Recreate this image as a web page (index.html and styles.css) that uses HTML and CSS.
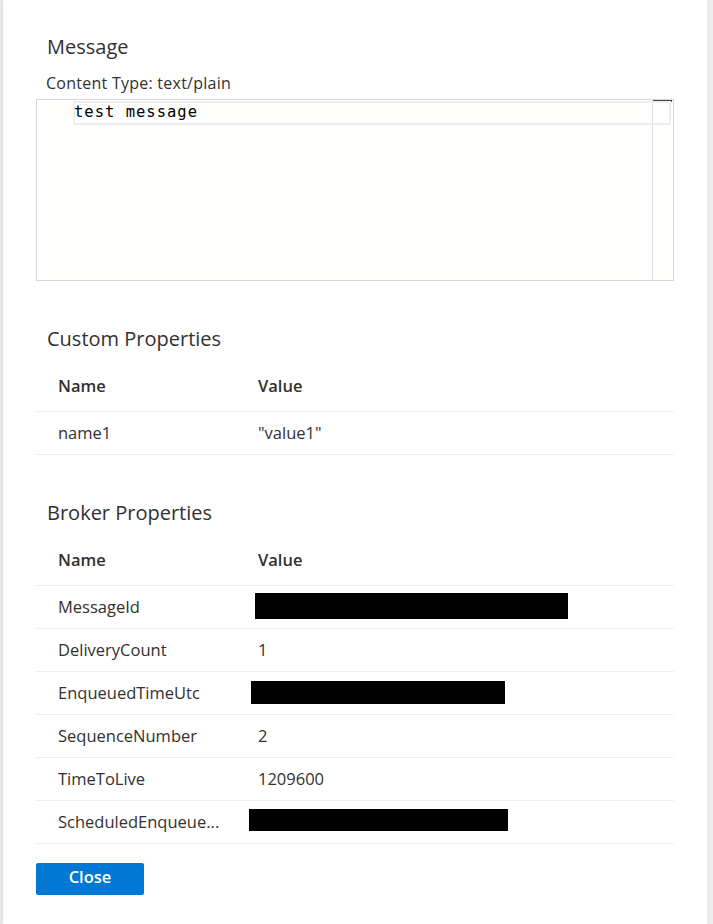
FILE: index.html
```html
<!DOCTYPE html>
<html>
<head>
<meta charset="utf-8">
<link rel="stylesheet" href="styles.css">
</head>
<body>
<div class="panel">
  <h2 class="heading first">Message</h2>
  <div class="ctype">Content Type: text/plain</div>
  <div class="editor">
    <div class="lines">
      <div class="current-line"><span class="code">test message</span></div>
    </div>
    <div class="ruler"><div class="ruler-cursor"></div></div>
  </div>

  <h2 class="heading">Custom Properties</h2>
  <div class="table">
    <div class="row head"><div class="c1">Name</div><div class="c2">Value</div></div>
    <div class="row"><div class="c1">name1</div><div class="c2">"value1"</div></div>
  </div>

  <h2 class="heading">Broker Properties</h2>
  <div class="table">
    <div class="row head"><div class="c1">Name</div><div class="c2">Value</div></div>
    <div class="row"><div class="c1">MessageId</div><div class="c2"><span class="redact r1"></span></div></div>
    <div class="row"><div class="c1">DeliveryCount</div><div class="c2">1</div></div>
    <div class="row"><div class="c1">EnqueuedTimeUtc</div><div class="c2"><span class="redact r2"></span></div></div>
    <div class="row"><div class="c1">SequenceNumber</div><div class="c2">2</div></div>
    <div class="row"><div class="c1">TimeToLive</div><div class="c2">1209600</div></div>
    <div class="row"><div class="c1">ScheduledEnqueue...</div><div class="c2"><span class="redact r3"></span></div></div>
  </div>

  <button class="close">Close</button>
</div>
</body>
</html>
```
FILE: styles.css
```css
html, body {
  margin: 0;
  padding: 0;
  height: 100%;
}
body {
  background: #ececec;
  font-family: "Open Sans", "Noto Sans", sans-serif;
  color: #323130;
}
.panel {
  margin-left: 3px;
  width: 704px;
  min-height: 924px;
  box-sizing: border-box;
  background: #ffffff;
  padding: 33px 33px 0 33px;
  box-shadow: -1px 0 3px rgba(0,0,0,0.08);
}
.heading {
  margin: 0;
  font-size: 20px;
  font-weight: 400;
  line-height: 28px;
  padding-left: 11px;
  margin-top: 44px;
  margin-bottom: 14px;
}
.heading.first {
  margin-top: 0;
  margin-bottom: 12px;
}
.ctype {
  font-size: 16px;
  letter-spacing: 0.25px;
  line-height: 20px;
  padding-left: 10px;
  margin-bottom: 6px;
}
.editor {
  height: 180px;
  border: 1px solid #d6d6d6;
  background: #fffffe;
  display: flex;
}
.lines {
  flex: 1;
  padding-top: 1px;
}
.current-line {
  margin-left: 36px;
  margin-right: -19px;
  height: 20px;
  border: 2px solid #eeeeee;
  position: relative;
  z-index: 1;
}
.code {
  font-family: "DejaVu Sans Mono", "Liberation Mono", monospace;
  font-size: 15.5px;
  letter-spacing: 1px;
  line-height: 19px;
  color: #000;
  display: block;
  margin-top: 0;
  margin-left: -1px;
}
.ruler {
  width: 20px;
  border-left: 1px solid #dcdcdc;
}
.ruler-cursor {
  height: 2px;
  background: #4a4a4a;
  margin-right: 1px;
}
.table {
  font-size: 16.5px;
}
.row {
  display: flex;
  border-bottom: 1px solid #efefef;
  line-height: 22px;
  padding: 10px 0;
}
.row.head {
  font-weight: 600;
  padding: 8px 0 14px 0;
}
.c1 {
  width: 200px;
  padding-left: 22px;
  white-space: nowrap;
}
.c2 {
  flex: 1;
}
.redact {
  display: inline-block;
  background: #000;
  vertical-align: top;
}
.r1 { width: 313px; height: 26px; margin: -3px 0 -1px -3px; }
.r2 { width: 254px; height: 23px; margin: -1px 0 0 -7px; }
.r3 { width: 259px; height: 22px; margin: -2px 0 2px -9px; }
.close {
  margin-top: 19px;
  width: 108px;
  height: 32px;
  background: #0078d4;
  color: #ffffff;
  border: none;
  border-radius: 2px;
  font-family: "Open Sans", "Noto Sans", sans-serif;
  font-weight: 600;
  font-size: 16.5px;
  line-height: 22px;
  padding: 0 0 4px 0;
}
```
